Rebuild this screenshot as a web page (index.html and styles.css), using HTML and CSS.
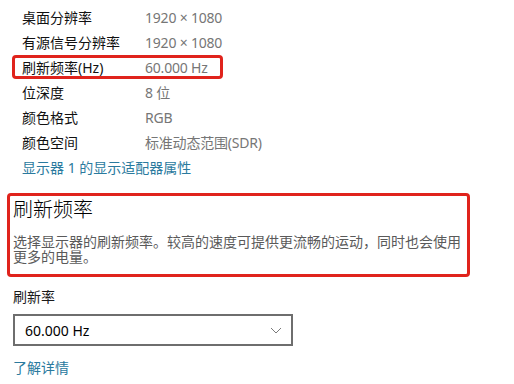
FILE: index.html
```html
<!DOCTYPE html>
<html lang="zh-CN">
<head>
<meta charset="utf-8">
<title>显示器属性</title>
<link rel="stylesheet" href="styles.css">
</head>
<body>
<div class="page">
  <section class="info">
    <div class="row"><span class="label">桌面分辨率</span><span class="value">1920 × 1080</span></div>
    <div class="row"><span class="label">有源信号分辨率</span><span class="value">1920 × 1080</span></div>
    <div class="row marked"><span class="label">刷新频率(Hz)</span><span class="value">60.000 Hz</span></div>
    <div class="row"><span class="label">位深度</span><span class="value">8 位</span></div>
    <div class="row"><span class="label">颜色格式</span><span class="value">RGB</span></div>
    <div class="row"><span class="label">颜色空间</span><span class="value">标准动态范围(SDR)</span></div>
    <a class="link info-link" href="#">显示器 1 的显示适配器属性</a>
  </section>

  <section class="highlight">
    <h2 class="title">刷新频率</h2>
    <p class="desc">选择显示器的刷新频率。较高的速度可提供更流畅的运动，同时也会使用更多的电量。</p>
  </section>

  <div class="field-label">刷新率</div>
  <div class="select">
    <span class="select-text">60.000 Hz</span>
    <svg class="chevron" width="12" height="7" viewBox="0 0 12 7"><polyline points="1,1 6,6 11,1" fill="none" stroke="#7a7a7a" stroke-width="1"/></svg>
  </div>
  <a class="link more" href="#">了解详情</a>
</div>
</body>
</html>
```

FILE: styles.css
```css
html, body {
  margin: 0;
  padding: 0;
  background: #ffffff;
}
body {
  font-family: "Segoe UI", "Noto Sans", "Noto Sans CJK SC", sans-serif;
  font-size: 14px;
  color: #000000;
}
.page {
  display: flex;
  flex-direction: column;
  align-items: flex-start;
  padding-left: 13px;
}
.info {
  display: flex;
  flex-direction: column;
  padding-top: 5px;
  padding-left: 9px;
}
.row {
  display: grid;
  grid-template-columns: 123px auto;
  height: 25px;
  line-height: 25px;
  white-space: nowrap;
}
.label {
  color: #111111;
}
.value {
  color: #767676;
  letter-spacing: -0.2px;
}
.marked {
  position: relative;
}
.marked::after {
  content: "";
  position: absolute;
  left: -10px;
  top: 0;
  width: 211px;
  height: 24px;
  box-sizing: border-box;
  border: 3px solid #e0231c;
  border-radius: 4px;
}
.link {
  color: #2a7a9e;
  text-decoration: none;
}
.info-link {
  height: 25px;
  line-height: 25px;
}
.highlight {
  margin: 13px 0 0 -6px;
  width: 463px;
  box-sizing: border-box;
  border: 3px solid #e0231c;
  border-radius: 4px;
  padding: 1px 0 10px 3px;
}
.title {
  margin: 0;
  font-size: 20px;
  font-weight: 300;
  line-height: 26px;
  height: 26px;
  color: #000000;
}
.desc {
  margin: 11px 0 0 0;
  line-height: 15px;
  color: #5a5a5a;
}
.field-label {
  margin-top: 10px;
  line-height: 20px;
  color: #1a1a1a;
}
.select {
  margin-top: 7px;
  width: 280px;
  height: 32px;
  box-sizing: border-box;
  border: 2px solid #6e6e6e;
  display: flex;
  align-items: center;
  justify-content: space-between;
  padding: 0 9px 0 10px;
}
.select-text {
  color: #000000;
}
.chevron {
  display: block;
}
.more {
  margin-top: 12px;
  line-height: 20px;
}
```
